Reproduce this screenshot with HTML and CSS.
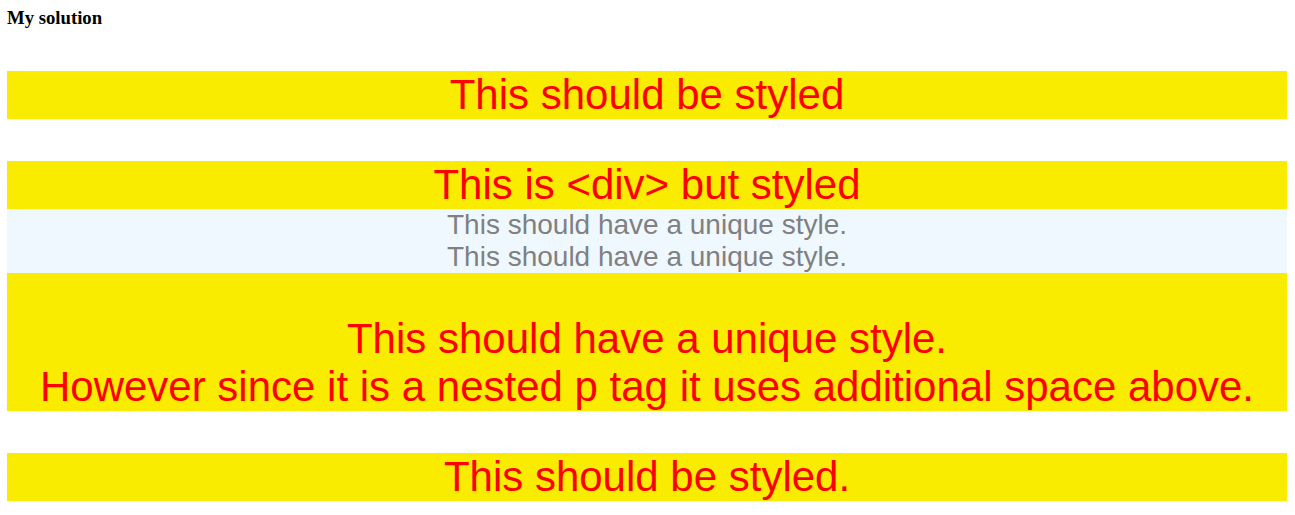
FILE: index.html
```html
<!DOCTYPE html>
<html>
<head>
<meta charset="utf-8">
<title>My solution</title>
<link rel="stylesheet" href="styles.css">
</head>
<body>
<h3 class="title">My solution</h3>
<p class="styled">This should be styled</p>
<div class="styled">This is &lt;div&gt; but styled</div>
<div class="unique">This should have a unique style.<br>This should have a unique style.</div>
<div class="styled nested"><p class="inner">This should have a unique style.<br>However since it is a nested p tag it uses additional space above.</p></div>
<p class="styled">This should be styled.</p>
</body>
</html>
```
FILE: styles.css
```css
body {
  margin: 7px 8px 8px 7px;
  font-family: "Liberation Serif", serif;
  background: #ffffff;
}
.title {
  margin: 0 0 18.72px;
  font-size: 18.72px;
  font-weight: bold;
  color: #000000;
}
.styled {
  background: #f9ec00;
  color: #ff0000;
  font-family: "Liberation Sans", Arial, sans-serif;
  font-size: 42px;
  text-align: center;
}
p.styled {
  margin: 42px 0;
}
div.styled {
  margin: 0;
}
.unique {
  background: #f0f8ff;
  color: #808080;
  font-family: "Liberation Sans", Arial, sans-serif;
  font-size: 28px;
  text-align: center;
}
.nested {
  display: flow-root;
}
.inner {
  margin: 42px 0 0;
}
```
